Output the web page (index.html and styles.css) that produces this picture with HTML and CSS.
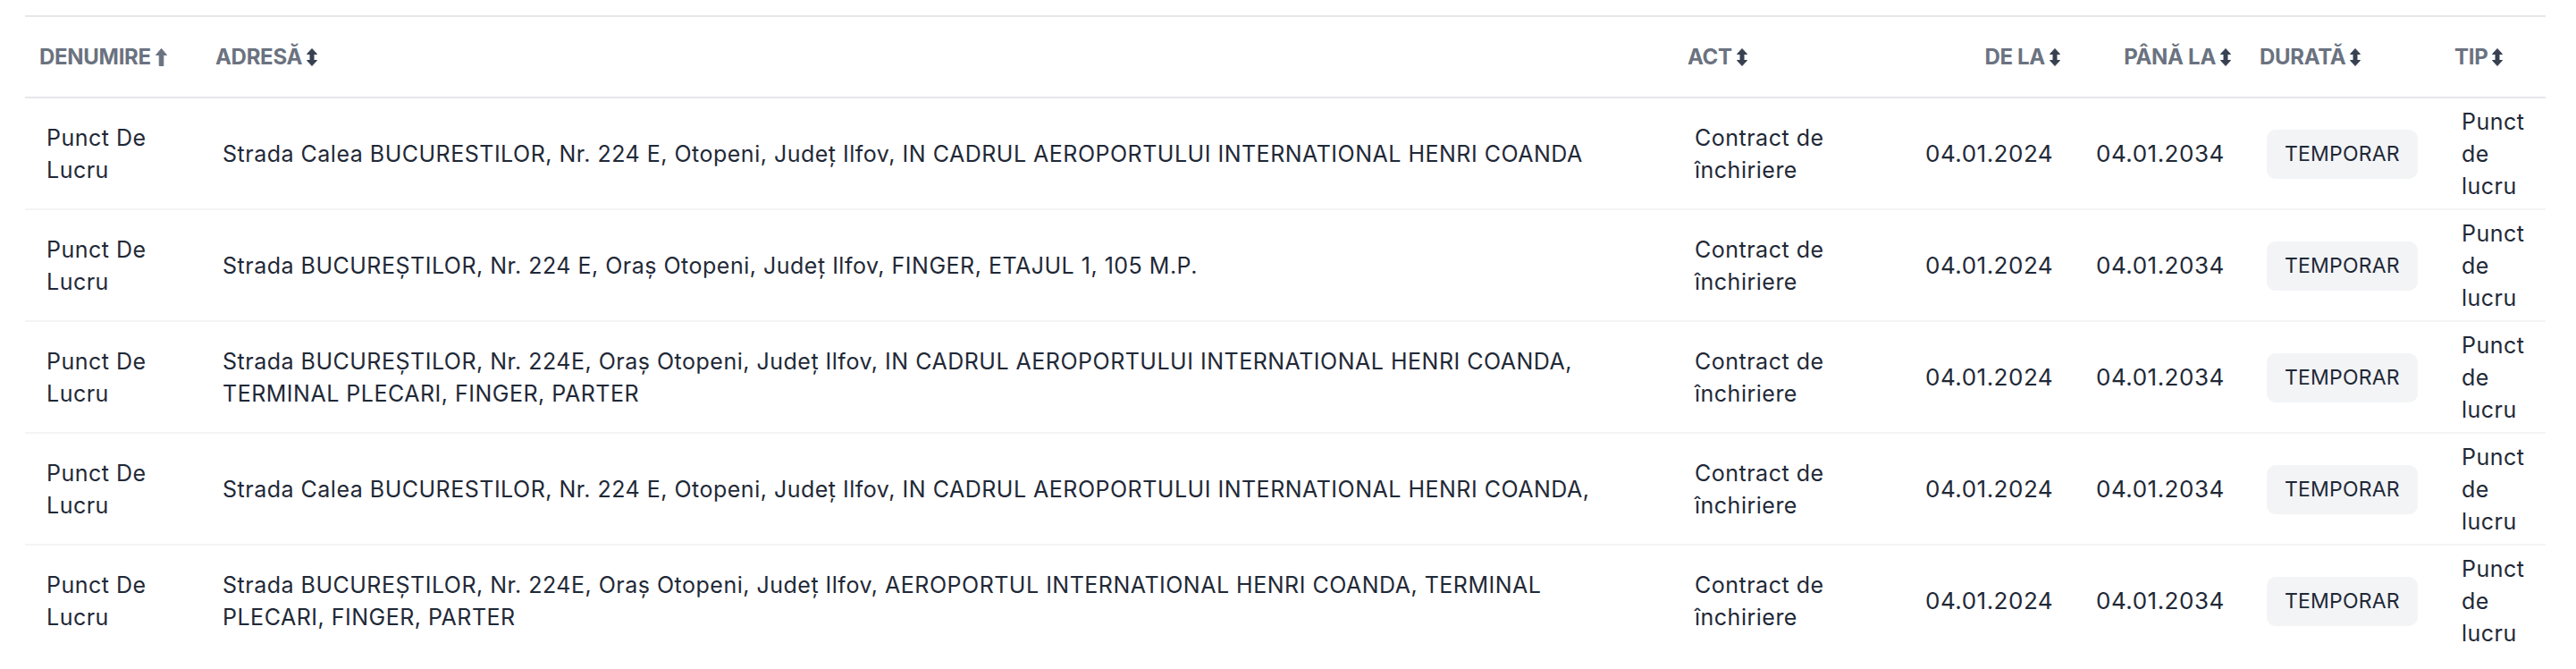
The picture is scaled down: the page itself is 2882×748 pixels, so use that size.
FILE: index.html
```html
<!DOCTYPE html>
<html lang="ro">
<head>
    <meta charset="UTF-8">
    <meta name="viewport" content="width=device-width, initial-scale=1.0">
    <title>Puncte de lucru</title>
    <link rel="stylesheet" href="styles.css">
</head>
<body>

    <div class="table-wrap">
        <table class="sites">
            <colgroup>
                <col class="c-name">
                <col class="c-address">
                <col class="c-act">
                <col class="c-from">
                <col class="c-to">
                <col class="c-duration">
                <col class="c-type">
            </colgroup>
            <thead>
                <tr>
                    <th><span class="th-inner">Denumire
                        <svg class="sort sort-up" viewBox="0 0 13 20"><path d="M6.5 0.5 L12.5 7.5 H8.8 V19.5 H4.2 V7.5 H0.5 Z"/></svg></span></th>
                    <th><span class="th-inner">Adresă
                        <svg class="sort" viewBox="0 0 12 20"><path d="M6 0.5 L11.5 6.5 H8 V13.5 H11.5 L6 19.5 L0.5 13.5 H4 V6.5 H0.5 Z"/></svg></span></th>
                    <th><span class="th-inner">Act
                        <svg class="sort" viewBox="0 0 12 20"><path d="M6 0.5 L11.5 6.5 H8 V13.5 H11.5 L6 19.5 L0.5 13.5 H4 V6.5 H0.5 Z"/></svg></span></th>
                    <th class="right"><span class="th-inner">De la
                        <svg class="sort" viewBox="0 0 12 20"><path d="M6 0.5 L11.5 6.5 H8 V13.5 H11.5 L6 19.5 L0.5 13.5 H4 V6.5 H0.5 Z"/></svg></span></th>
                    <th class="right"><span class="th-inner">Până la
                        <svg class="sort" viewBox="0 0 12 20"><path d="M6 0.5 L11.5 6.5 H8 V13.5 H11.5 L6 19.5 L0.5 13.5 H4 V6.5 H0.5 Z"/></svg></span></th>
                    <th><span class="th-inner">Durată
                        <svg class="sort" viewBox="0 0 12 20"><path d="M6 0.5 L11.5 6.5 H8 V13.5 H11.5 L6 19.5 L0.5 13.5 H4 V6.5 H0.5 Z"/></svg></span></th>
                    <th><span class="th-inner">Tip
                        <svg class="sort" viewBox="0 0 12 20"><path d="M6 0.5 L11.5 6.5 H8 V13.5 H11.5 L6 19.5 L0.5 13.5 H4 V6.5 H0.5 Z"/></svg></span></th>
                </tr>
            </thead>
            <tbody>
                <tr>
                    <td>Punct De Lucru</td>
                    <td class="address">Strada Calea BUCURESTILOR, Nr. 224 E, Otopeni, Județ Ilfov, IN CADRUL AEROPORTULUI INTERNATIONAL HENRI COANDA</td>
                    <td>Contract de închiriere</td>
                    <td class="right date">04.01.2024</td>
                    <td class="right date">04.01.2034</td>
                    <td><span class="badge">TEMPORAR</span></td>
                    <td>Punct de lucru</td>
                </tr>
                <tr>
                    <td>Punct De Lucru</td>
                    <td class="address">Strada BUCUREŞTILOR, Nr. 224 E, Oraş Otopeni, Județ Ilfov, FINGER, ETAJUL 1, 105 M.P.</td>
                    <td>Contract de închiriere</td>
                    <td class="right date">04.01.2024</td>
                    <td class="right date">04.01.2034</td>
                    <td><span class="badge">TEMPORAR</span></td>
                    <td>Punct de lucru</td>
                </tr>
                <tr>
                    <td>Punct De Lucru</td>
                    <td class="address">Strada BUCUREŞTILOR, Nr. 224E, Oraş Otopeni, Județ Ilfov, IN CADRUL AEROPORTULUI INTERNATIONAL HENRI COANDA, TERMINAL PLECARI, FINGER, PARTER</td>
                    <td>Contract de închiriere</td>
                    <td class="right date">04.01.2024</td>
                    <td class="right date">04.01.2034</td>
                    <td><span class="badge">TEMPORAR</span></td>
                    <td>Punct de lucru</td>
                </tr>
                <tr>
                    <td>Punct De Lucru</td>
                    <td class="address">Strada Calea BUCURESTILOR, Nr. 224 E, Otopeni, Județ Ilfov, IN CADRUL AEROPORTULUI INTERNATIONAL HENRI COANDA,</td>
                    <td>Contract de închiriere</td>
                    <td class="right date">04.01.2024</td>
                    <td class="right date">04.01.2034</td>
                    <td><span class="badge">TEMPORAR</span></td>
                    <td>Punct de lucru</td>
                </tr>
                <tr>
                    <td>Punct De Lucru</td>
                    <td class="address">Strada BUCUREŞTILOR, Nr. 224E, Oraş Otopeni, Județ Ilfov, AEROPORTUL INTERNATIONAL HENRI COANDA, TERMINAL PLECARI, FINGER, PARTER</td>
                    <td>Contract de închiriere</td>
                    <td class="right date">04.01.2024</td>
                    <td class="right date">04.01.2034</td>
                    <td><span class="badge">TEMPORAR</span></td>
                    <td>Punct de lucru</td>
                </tr>
            </tbody>
        </table>
    </div>

</body>
</html>
```

FILE: styles.css
```css
body {
    margin: 0;
    background-color: #fff;
    font-family: Inter, "Noto Sans", sans-serif;
    color: #1f2937;
}

.table-wrap {
    padding: 17px 34px 0 28px;
}

.sites {
    width: 2820px;
    table-layout: fixed;
    border-collapse: collapse;
    border-top: 2px solid #e5e7eb;
}

.c-name { width: 197px; }
.c-address { width: 1647px; }
.c-act { width: 258px; }
.c-from { width: 191px; }
.c-to { width: 191px; }
.c-duration { width: 218px; }
.c-type { width: 118px; }

.sites th {
    height: 89px;
    padding: 0 16px;
    border-bottom: 2px solid #e5e7eb;
    text-align: left;
    vertical-align: middle;
    font-size: 24px;
    font-weight: 700;
    letter-spacing: -0.3px;
    text-transform: uppercase;
    color: #6b7280;
    white-space: nowrap;
}

.th-inner {
    display: inline-flex;
    align-items: center;
    gap: 5px;
}

.sort {
    width: 12px;
    height: 20px;
    fill: #374151;
    stroke: #374151;
    stroke-width: 1;
    stroke-linejoin: round;
}

.sort-up {
    width: 13px;
    fill: #6b7280;
    stroke: #6b7280;
}

.sites td {
    padding: 8px 24px 7px;
    border-bottom: 2px solid #f3f4f6;
    vertical-align: middle;
    font-size: 25px;
    line-height: 36px;
    font-weight: 400;
    letter-spacing: 0.5px;
}

.sites td.address {
    padding-right: 48px;
}

.sites tbody tr:last-child td {
    border-bottom: none;
}

.sites .right {
    text-align: right;
}

.sites td.date {
    font-size: 26px;
}

.badge {
    display: inline-block;
    padding: 9px 20px;
    border-radius: 10px;
    background-color: #f3f4f6;
    font-size: 23px;
    line-height: 37px;
    letter-spacing: 0.2px;
    color: #1f2937;
}
```
